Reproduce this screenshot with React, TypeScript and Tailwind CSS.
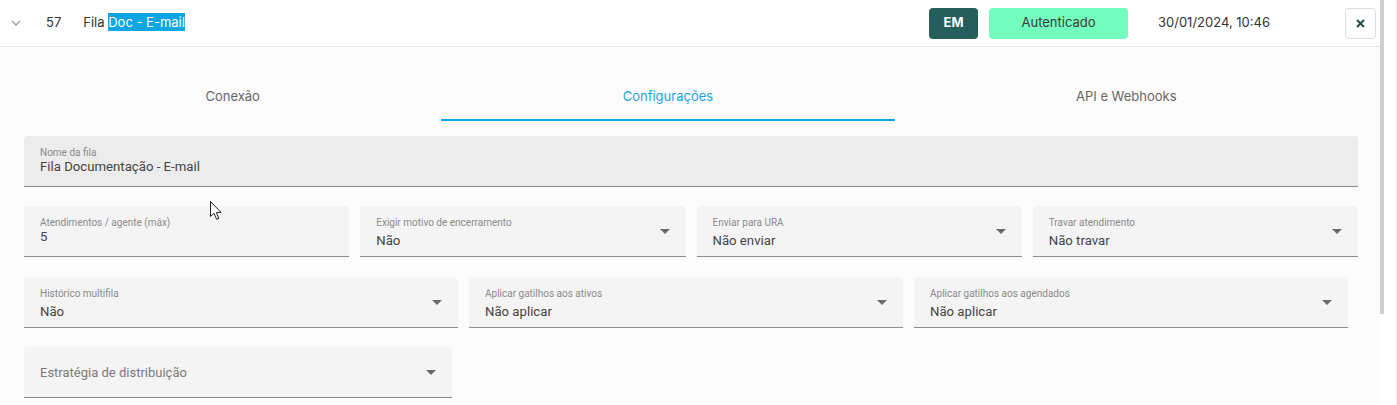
import React from "react";

const Arrow = () => (
  <svg width="10" height="5" viewBox="0 0 10 5" className="shrink-0">
    <path d="M0 0 L10 0 L5 5 Z" fill="#6b6b6b" />
  </svg>
);

type FieldProps = {
  label: string;
  value?: string;
  select?: boolean;
  w?: string;
  dark?: boolean;
  placeholder?: boolean;
};

function Field({ label, value, select, w, dark, placeholder }: FieldProps) {
  return (
    <div
      className={`${w ?? ""} h-[51px] rounded-t-[4px] border-b border-[#8c8c8c] ${
        dark ? "bg-[#ececec]" : "bg-[#f4f4f4]"
      } flex items-center pl-[16px] pr-[16px]`}
    >
      {placeholder ? (
        <div className="flex-1 text-[13px] leading-[17px] text-[#7a7a7a] pt-[1px]">{label}</div>
      ) : (
        <div className="flex-1 flex flex-col self-start pt-[11px]">
          <div className="text-[10px] leading-[12px] text-[#8a8a8a]">{label}</div>
          <div
            className={`text-[13.2px] leading-[18px] text-[#444] ${
              select ? "mt-[3px]" : "mt-[-1px]"
            }`}
          >
            {value}
          </div>
        </div>
      )}
      {select && <Arrow />}
    </div>
  );
}

export default function App() {
  return (
    <div className="w-[1397px] h-[405px] flex bg-white overflow-hidden relative">
      <div className="w-[1380px] flex flex-col">
        {/* Header */}
        <div
          className="h-[47px] shrink-0 border-b border-[#e3e3e3] bg-white flex items-center text-[13px] text-[#333]"
          style={{ fontFamily: "Inter, 'Noto Sans', sans-serif" }}
        >
          <div className="w-[30px] flex justify-center pl-[1px]">
            <svg width="10" height="6" viewBox="0 0 10 6">
              <path d="M1 1 L5 5 L9 1" fill="none" stroke="#9a9a9a" strokeWidth="1.3" />
            </svg>
          </div>
          <span className="ml-[16px] text-[13px]">57</span>
          <span className="ml-[22px] text-[13px]">
            Fila <span className="bg-[#0ea6e4] text-white py-[1px]">Doc - E-mail</span>
          </span>
          <div className="ml-auto flex items-center">
            <div className="w-[49px] h-[31px] rounded-[4px] bg-[#255e5b] text-white font-bold text-[13px] flex items-center justify-center">
              EM
            </div>
            <div className="ml-[11px] w-[139px] h-[31px] rounded-[4px] bg-[#73fdbe] text-[#3a3a3a] text-[13px] flex items-center justify-center">
              Autenticado
            </div>
            <div className="ml-[30px] w-[187px] text-[13px] text-[#333]">30/01/2024, 10:46</div>
            <div className="w-[31px] h-[31px] rounded-[4px] border border-[#dcdcdc] flex items-center justify-center mr-[4px]">
              <svg width="9" height="9" viewBox="0 0 9 9">
                <path d="M1 1 L8 8 M8 1 L1 8" stroke="#1f4f4c" strokeWidth="2" />
              </svg>
            </div>
          </div>
        </div>

        {/* Content */}
        <div
          className="flex-1 bg-[#fcfcfc] pl-[24px] pr-[22px] pt-[27px]"
          style={{ fontFamily: "Roboto, 'Noto Sans', sans-serif" }}
        >
          <div
            className="flex h-[47px] text-[13px]"
            style={{ fontFamily: "Inter, 'Noto Sans', sans-serif" }}
          >
            <div className="flex-auto flex items-center justify-center text-[#666] pb-[2px]">Conexão</div>
            <div className="flex-auto flex items-center justify-center text-[#1ba4dc] border-b-2 border-[#0ea6e4]">
              Configurações
            </div>
            <div className="flex-auto flex items-center justify-center text-[#666] pb-[2px]">API e Webhooks</div>
          </div>

          <div className="mt-[15px]">
            <Field dark label="Nome da fila" value="Fila Documentação - E-mail" />
          </div>

          <div className="mt-[19px] flex gap-[11px]">
            <Field w="flex-1" label="Atendimentos / agente (máx)" value="5" />
            <Field w="flex-1" select label="Exigir motivo de encerramento" value="Não" />
            <Field w="flex-1" select label="Enviar para URA" value="Não enviar" />
            <Field w="flex-1" select label="Travar atendimento" value="Não travar" />
          </div>

          <div className="mt-[20px] flex gap-[11px] w-[1324px]">
            <Field w="flex-1" select label="Histórico multifila" value="Não" />
            <Field w="flex-1" select label="Aplicar gatilhos aos ativos" value="Não aplicar" />
            <Field w="flex-1" select label="Aplicar gatilhos aos agendados" value="Não aplicar" />
          </div>

          <div className="mt-[19px] w-[428px]">
            <Field select placeholder label="Estratégia de distribuição" />
          </div>
        </div>
      </div>

      {/* scrollbar */}
      <div className="w-[4px] shrink-0">
        <div className="h-[314px] bg-[#cfcfcf]" />
      </div>
      <div className="flex-1 bg-white border-r border-[#ebebeb]" />

      {/* mouse cursor */}
      <svg
        className="absolute left-[210px] top-[201px]"
        width="13"
        height="20"
        viewBox="0 0 13 20"
      >
        <path
          d="M0.5 0.5 L0.5 15.5 L4 12.2 L6.6 18.3 L8.8 17.4 L6.3 11.4 L11 11.4 Z"
          fill="white"
          stroke="#222"
          strokeWidth="1"
          strokeLinejoin="round"
        />
      </svg>
    </div>
  );
}
